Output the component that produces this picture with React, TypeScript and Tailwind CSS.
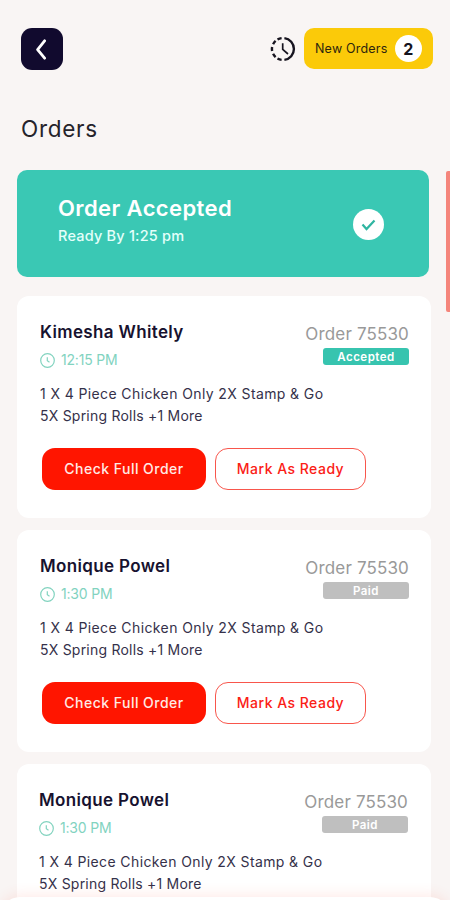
import React from "react";
import clsx from "clsx";

type Order = {
	customer: string;
	time: string;
	number: string;
	status: "Accepted" | "Paid";
};

const orders: Order[] = [
	{ customer: "Kimesha Whitely", time: "12:15 PM", number: "75530", status: "Accepted" },
	{ customer: "Monique Powel", time: "1:30 PM", number: "75530", status: "Paid" },
	{ customer: "Monique Powel", time: "1:30 PM", number: "75530", status: "Paid" },
];

function HistoryIcon() {
	return (
		<svg width="26" height="26" viewBox="0 0 26 26" fill="none" stroke="#17141f" strokeWidth="2.4">
			<path d="M14.4 2.1A11 11 0 0 1 14.4 23.9" />
			<path d="M11.6 2.1A11 11 0 0 0 7.5 3.5M5.6 4.9A11 11 0 0 0 3.1 8.2M2.1 11A11 11 0 0 0 2.1 15M3.1 17.8A11 11 0 0 0 5.6 21.1M7.5 22.5A11 11 0 0 0 11.6 23.9" />
			<path d="M12.7 7.2V13.4L18 18" strokeWidth="1.7" />
		</svg>
	);
}

function ClockIcon() {
	return (
		<svg width="15" height="15" viewBox="0 0 15 15" fill="none" stroke="#82d3bf" strokeWidth="1.2">
			<circle cx="7.5" cy="7.5" r="6.8" />
			<path d="M7.3 4.2V7.8L9.5 9.3" />
		</svg>
	);
}

function OrderCard({
	order,
	className,
	actions = true,
}: {
	order: Order;
	className?: string;
	actions?: boolean;
}) {
	return (
		<article className="h-[222px] w-[414px] shrink-0 rounded-xl bg-white">
			<div className={clsx("pt-[25px] pr-[22px] pl-[23px]", className)}>
				<div className="flex justify-between">
					<div>
						<h2 className="text-[17px] leading-[22px] font-semibold tracking-[0.35px] text-[#17122f]">
							{order.customer}
						</h2>
						<p className="mt-[6px] flex items-center gap-[6px] text-[14px] leading-[22px] tracking-[-0.2px] text-[#82d3bf]">
							<ClockIcon />
							{order.time}
						</p>
					</div>
					<div className="flex flex-col items-end">
						<p className="text-[17px] leading-[26px] tracking-[0.15px] text-[#999]">
							Order {order.number}
						</p>
						<span
							className={clsx(
								"mt-px h-[17px] w-[86px] rounded-[3px] text-center text-[11.5px] leading-[18px] font-semibold tracking-[0.5px] text-white",
								order.status === "Accepted" ? "bg-[#37c4af]" : "bg-[#bfbfbf]",
							)}
						>
							{order.status}
						</span>
					</div>
				</div>
				<p className="mt-[12px] text-[14px] leading-[21.6px] whitespace-nowrap text-[#35314a]">
					<span className="block tracking-[0.39px]">1 X 4 Piece Chicken Only 2X Stamp & Go</span>
					<span className="block tracking-[0.22px]">5X Spring Rolls +1 More</span>
				</p>
				{actions && (
					<div className="mt-[22px] ml-[2px] flex gap-[9px] text-[14px] font-medium tracking-[0.48px]">
						<button className="h-[42px] w-[164px] rounded-[13px] bg-[#ff1500] pb-[2px] text-[#ffe9e4]">
							Check Full Order
						</button>
						<button className="h-[42px] w-[151px] rounded-[13px] border border-[#f8564c] pb-[2px] text-[#fb2016]">
							Mark As Ready
						</button>
					</div>
				)}
			</div>
		</article>
	);
}

export default function App() {
	return (
		<main className="relative flex h-[900px] w-[450px] flex-col overflow-hidden bg-[#f9f5f4] font-['Inter',sans-serif]">
			<header className="flex items-start pt-7 pr-[17px] pl-[21px]">
				<button className="flex size-[42px] items-center justify-center rounded-[11px] bg-[#110a2e] pr-[2px]" aria-label="Back">
					<svg width="12" height="22" viewBox="0 0 12 22" fill="none" stroke="white" strokeWidth="2.8" strokeLinecap="round" strokeLinejoin="round">
						<path d="M9.6 2.8L2.6 11.6L9.6 20.2" />
					</svg>
				</button>
				<div className="ml-auto flex items-center">
					<HistoryIcon />
					<button className="ml-2 flex h-[41px] w-[129px] items-center justify-between rounded-[10px] bg-[#fbca09] pr-[11px] pl-[11px] text-[12.5px] tracking-[0.2px] text-[#2d260e]">
						<span className="pt-[2px]">New Orders</span>
						<span className="flex size-[27px] items-center justify-center rounded-full bg-white text-[16px] font-bold text-[#15131d]">
							2
						</span>
					</button>
				</div>
			</header>

			<h1 className="mt-[44px] ml-[21px] text-[22.5px] leading-[30px] tracking-[0.7px] text-[#25232a]">
				Orders
			</h1>

			<section className="mt-[26px] ml-[17px] flex h-[107px] w-[412px] shrink-0 items-start justify-between rounded-[10px] bg-[#3ac8b4] pr-[45px] pl-[41px] text-white">
				<div className="pt-6">
					<p className="text-[22px] leading-[28px] font-semibold tracking-[0.4px]">Order Accepted</p>
					<p className="mt-[3px] text-[14.5px] leading-[22px] font-medium tracking-[0.2px] text-[#e4fffa]">
						Ready By 1:25 pm
					</p>
				</div>
				<svg className="mt-[39px]" width="31" height="31" viewBox="0 0 31 31" fill="none">
					<circle cx="15.5" cy="15.5" r="15.5" fill="white" />
					<path d="M9.5 15.5L13.5 20L21.5 11.5" stroke="#2fb5a1" strokeWidth="2.2" />
				</svg>
			</section>

			<section className="mt-[19px] ml-[17px] flex flex-col gap-3">
				{orders.map((order, i) => (
					<OrderCard
						key={i}
						order={order}
						className={i === 2 ? "-ml-px mr-px" : undefined}
						actions={i < 2}
					/>
				))}
			</section>

			{/* scroll thumb */}
			<div className="absolute top-[171px] right-0 h-[141px] w-1 rounded-l-xs bg-[#f5857b]" />
			{/* top edge of the bottom sheet */}
			<div className="absolute top-[897px] left-0 h-10 w-full rounded-t-[20px] bg-white shadow-[0_-2px_14px_rgba(255,80,60,0.12)]" />
		</main>
	);
}
